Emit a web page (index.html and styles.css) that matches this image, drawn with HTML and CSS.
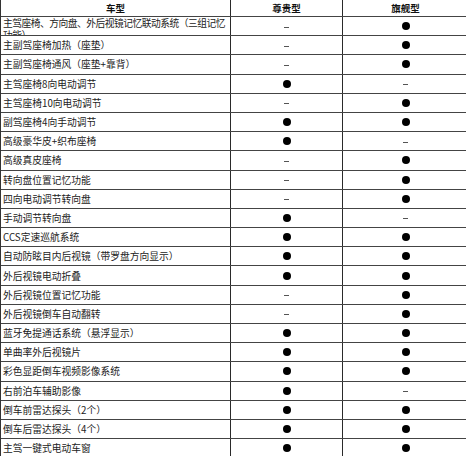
FILE: index.html
```html
<!DOCTYPE html>
<html lang="zh-CN">
<head>
<meta charset="utf-8">
<title>配置表</title>
<link rel="stylesheet" href="styles.css">
</head>
<body>
<div class="frame">
  <div class="table">
    <div class="row head">
      <div class="cell name">车型</div>
      <div class="cell val">尊贵型</div>
      <div class="cell val">旗舰型</div>
    </div>
    <div class="row">
      <div class="cell name wrap">主驾座椅、方向盘、外后视镜记忆联动系统（三组记忆功能）</div>
      <div class="cell val"><span class="no"></span></div>
      <div class="cell val"><span class="yes"></span></div>
    </div>
    <div class="row">
      <div class="cell name">主副驾座椅加热（座垫）</div>
      <div class="cell val"><span class="no"></span></div>
      <div class="cell val"><span class="yes"></span></div>
    </div>
    <div class="row">
      <div class="cell name">主副驾座椅通风（座垫+靠背）</div>
      <div class="cell val"><span class="no"></span></div>
      <div class="cell val"><span class="yes"></span></div>
    </div>
    <div class="row">
      <div class="cell name">主驾座椅8向电动调节</div>
      <div class="cell val"><span class="yes"></span></div>
      <div class="cell val"><span class="no"></span></div>
    </div>
    <div class="row">
      <div class="cell name">主驾座椅10向电动调节</div>
      <div class="cell val"><span class="no"></span></div>
      <div class="cell val"><span class="yes"></span></div>
    </div>
    <div class="row">
      <div class="cell name">副驾座椅4向手动调节</div>
      <div class="cell val"><span class="yes"></span></div>
      <div class="cell val"><span class="yes"></span></div>
    </div>
    <div class="row">
      <div class="cell name">高级豪华皮+织布座椅</div>
      <div class="cell val"><span class="yes"></span></div>
      <div class="cell val"><span class="no"></span></div>
    </div>
    <div class="row">
      <div class="cell name">高级真皮座椅</div>
      <div class="cell val"><span class="no"></span></div>
      <div class="cell val"><span class="yes"></span></div>
    </div>
    <div class="row">
      <div class="cell name">转向盘位置记忆功能</div>
      <div class="cell val"><span class="no"></span></div>
      <div class="cell val"><span class="yes"></span></div>
    </div>
    <div class="row">
      <div class="cell name">四向电动调节转向盘</div>
      <div class="cell val"><span class="no"></span></div>
      <div class="cell val"><span class="yes"></span></div>
    </div>
    <div class="row">
      <div class="cell name">手动调节转向盘</div>
      <div class="cell val"><span class="yes"></span></div>
      <div class="cell val"><span class="no"></span></div>
    </div>
    <div class="row">
      <div class="cell name">CCS定速巡航系统</div>
      <div class="cell val"><span class="yes"></span></div>
      <div class="cell val"><span class="yes"></span></div>
    </div>
    <div class="row">
      <div class="cell name">自动防眩目内后视镜（带罗盘方向显示）</div>
      <div class="cell val"><span class="yes"></span></div>
      <div class="cell val"><span class="yes"></span></div>
    </div>
    <div class="row">
      <div class="cell name">外后视镜电动折叠</div>
      <div class="cell val"><span class="yes"></span></div>
      <div class="cell val"><span class="yes"></span></div>
    </div>
    <div class="row">
      <div class="cell name">外后视镜位置记忆功能</div>
      <div class="cell val"><span class="no"></span></div>
      <div class="cell val"><span class="yes"></span></div>
    </div>
    <div class="row">
      <div class="cell name">外后视镜倒车自动翻转</div>
      <div class="cell val"><span class="no"></span></div>
      <div class="cell val"><span class="yes"></span></div>
    </div>
    <div class="row">
      <div class="cell name">蓝牙免提通话系统（悬浮显示）</div>
      <div class="cell val"><span class="yes"></span></div>
      <div class="cell val"><span class="yes"></span></div>
    </div>
    <div class="row">
      <div class="cell name">单曲率外后视镜片</div>
      <div class="cell val"><span class="yes"></span></div>
      <div class="cell val"><span class="yes"></span></div>
    </div>
    <div class="row">
      <div class="cell name">彩色显距倒车视频影像系统</div>
      <div class="cell val"><span class="yes"></span></div>
      <div class="cell val"><span class="yes"></span></div>
    </div>
    <div class="row">
      <div class="cell name">右前泊车辅助影像</div>
      <div class="cell val"><span class="yes"></span></div>
      <div class="cell val"><span class="no"></span></div>
    </div>
    <div class="row">
      <div class="cell name">倒车前雷达探头（2个）</div>
      <div class="cell val"><span class="yes"></span></div>
      <div class="cell val"><span class="yes"></span></div>
    </div>
    <div class="row">
      <div class="cell name">倒车后雷达探头（4个）</div>
      <div class="cell val"><span class="yes"></span></div>
      <div class="cell val"><span class="yes"></span></div>
    </div>
    <div class="row">
      <div class="cell name">主驾一键式电动车窗</div>
      <div class="cell val"><span class="yes"></span></div>
      <div class="cell val"><span class="yes"></span></div>
    </div>
  </div>
</div>
</body>
</html>
```

FILE: styles.css
```css
html, body {
  margin: 0;
  padding: 0;
  background: #fff;
  overflow: hidden;
}

.frame {
  width: 466px;
  height: 456px;
  overflow: hidden;
}

.table {
  width: 468px;
  border-left: 1px solid #333;
  font-family: "Noto Sans CJK SC", "Liberation Sans", sans-serif;
  font-size: 9.75px;
  color: #222;
}

.row {
  display: flex;
  box-sizing: border-box;
  height: 19.2px;
  border-bottom: 1px solid #444;
}

.row.head {
  height: 17px;
  font-weight: bold;
  font-size: 9.5px;
  color: #111;
}

.cell {
  box-sizing: border-box;
  height: 100%;
  border-right: 1px solid #2a2a2a;
  display: flex;
  align-items: center;
  overflow: hidden;
}

.cell:nth-child(1) { width: 230px; }
.cell:nth-child(2) { width: 112px; }
.cell:nth-child(3) { width: 126px; }

.name {
  padding-left: 2px;
  white-space: nowrap;
  line-height: 12px;
}

.head .cell {
  justify-content: center;
  padding-left: 0;
}

.name.wrap {
  white-space: normal;
  align-items: flex-start;
  letter-spacing: -0.5px;
  padding-top: 0;
}

.val {
  justify-content: center;
}

.yes {
  display: block;
  width: 8px;
  height: 8px;
  border-radius: 50%;
  background: #000;
}

.no {
  display: block;
  width: 5px;
  height: 1px;
  margin-top: 2px;
  background: #555;
}
```
